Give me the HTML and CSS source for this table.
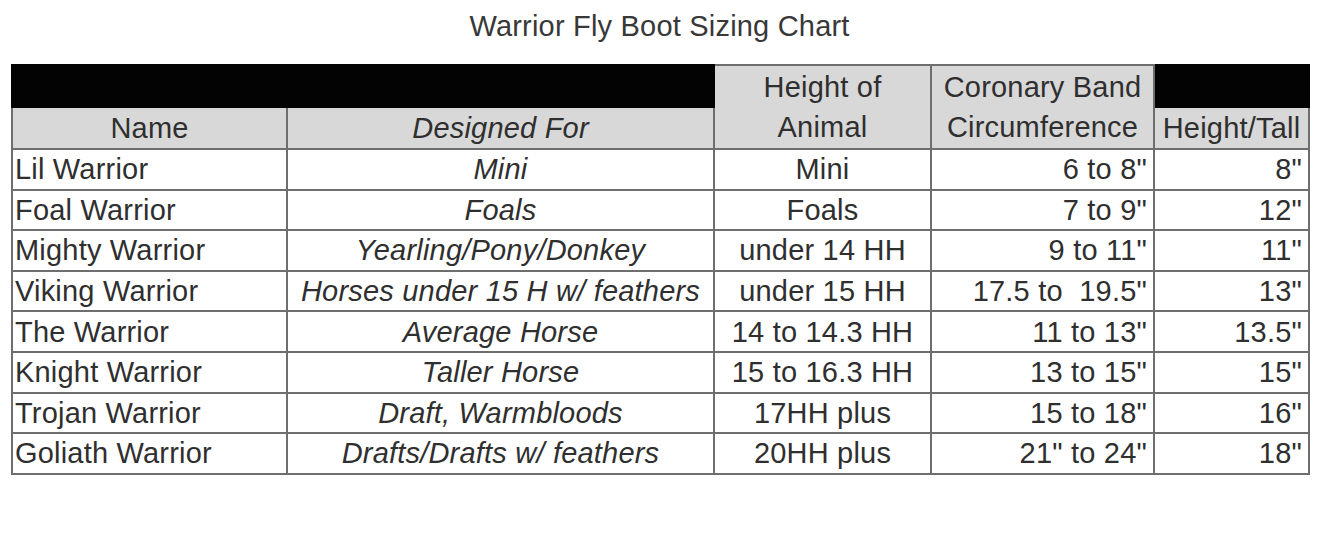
FILE: index.html
```html
<!DOCTYPE html>
<html>
<head>
<meta charset="utf-8">
<link rel="stylesheet" href="styles.css">
</head>
<body>
<div class="page">
  <h1 class="title">Warrior Fly Boot Sizing Chart</h1>
  <table class="chart">
    <colgroup>
      <col class="c1"><col class="c2"><col class="c3"><col class="c4"><col class="c5">
    </colgroup>
    <thead>
      <tr class="hrow">
        <th class="black" colspan="2"></th>
        <th class="grey tall" rowspan="2">Height of<br>Animal</th>
        <th class="grey tall" rowspan="2">Coronary Band<br>Circumference</th>
        <th class="black"></th>
      </tr>
      <tr class="hrow">
        <th class="grey">Name</th>
        <th class="grey it">Designed For</th>
        <th class="grey">Height/Tall</th>
      </tr>
    </thead>
    <tbody>
      <tr><td class="l">Lil Warrior</td><td class="it">Mini</td><td>Mini</td><td class="r">6 to 8"</td><td class="r">8"</td></tr>
      <tr><td class="l">Foal Warrior</td><td class="it">Foals</td><td>Foals</td><td class="r">7 to 9"</td><td class="r">12"</td></tr>
      <tr><td class="l">Mighty Warrior</td><td class="it">Yearling/Pony/Donkey</td><td>under 14 HH</td><td class="r">9 to 11"</td><td class="r">11"</td></tr>
      <tr><td class="l">Viking Warrior</td><td class="it">Horses under 15 H w/ feathers</td><td>under 15 HH</td><td class="r">17.5 to &nbsp;19.5"</td><td class="r">13"</td></tr>
      <tr><td class="l">The Warrior</td><td class="it">Average Horse</td><td>14 to 14.3 HH</td><td class="r">11 to 13"</td><td class="r">13.5"</td></tr>
      <tr><td class="l">Knight Warrior</td><td class="it">Taller Horse</td><td>15 to 16.3 HH</td><td class="r">13 to 15"</td><td class="r">15"</td></tr>
      <tr><td class="l">Trojan Warrior</td><td class="it">Draft, Warmbloods</td><td>17HH plus</td><td class="r">15 to 18"</td><td class="r">16"</td></tr>
      <tr><td class="l">Goliath Warrior</td><td class="it">Drafts/Drafts w/ feathers</td><td>20HH plus</td><td class="r">21" to 24"</td><td class="r">18"</td></tr>
    </tbody>
  </table>
</div>
</body>
</html>
```
FILE: styles.css
```css
html, body {
  margin: 0;
  padding: 0;
  background: #ffffff;
}
body {
  font-family: "Liberation Sans", Arial, sans-serif;
  color: #333333;
}
.page {
  width: 1336px;
  height: 537px;
  padding: 10px 0 0 11px;
  box-sizing: border-box;
}
.title {
  margin: 0;
  width: 1297px;
  text-align: center;
  font-size: 29px;
  font-weight: normal;
  line-height: 32px;
  height: 54px;
  color: #383838;
  letter-spacing: 0.2px;
}
.chart {
  border-collapse: collapse;
  table-layout: fixed;
  width: 1297px;
  font-size: 29px;
  letter-spacing: 0.2px;
  color: #2f2f2f;
  border: 2px solid #a9a9a9;
}
.c1 { width: 275px; }
.c2 { width: 427px; }
.c3 { width: 217px; }
.c4 { width: 223px; }
.c5 { width: 155px; }
.chart th, .chart td {
  border: 2px solid #6e6e6e;
  padding: 0 6px;
  white-space: nowrap;
  overflow: hidden;
  font-weight: normal;
  text-align: center;
  line-height: 30px;
}
.hrow { height: 42px; }
.chart tbody tr { height: 40.6px; }
.black {
  background: #030303;
  border-color: #030303 !important;
}
.grey {
  background: #d8d8d8;
}
.tall {
  line-height: 40px !important;
  vertical-align: middle;
}
.it { font-style: italic; }
.l { text-align: left !important; padding-left: 2px !important; }
.r { text-align: right !important; }
```
